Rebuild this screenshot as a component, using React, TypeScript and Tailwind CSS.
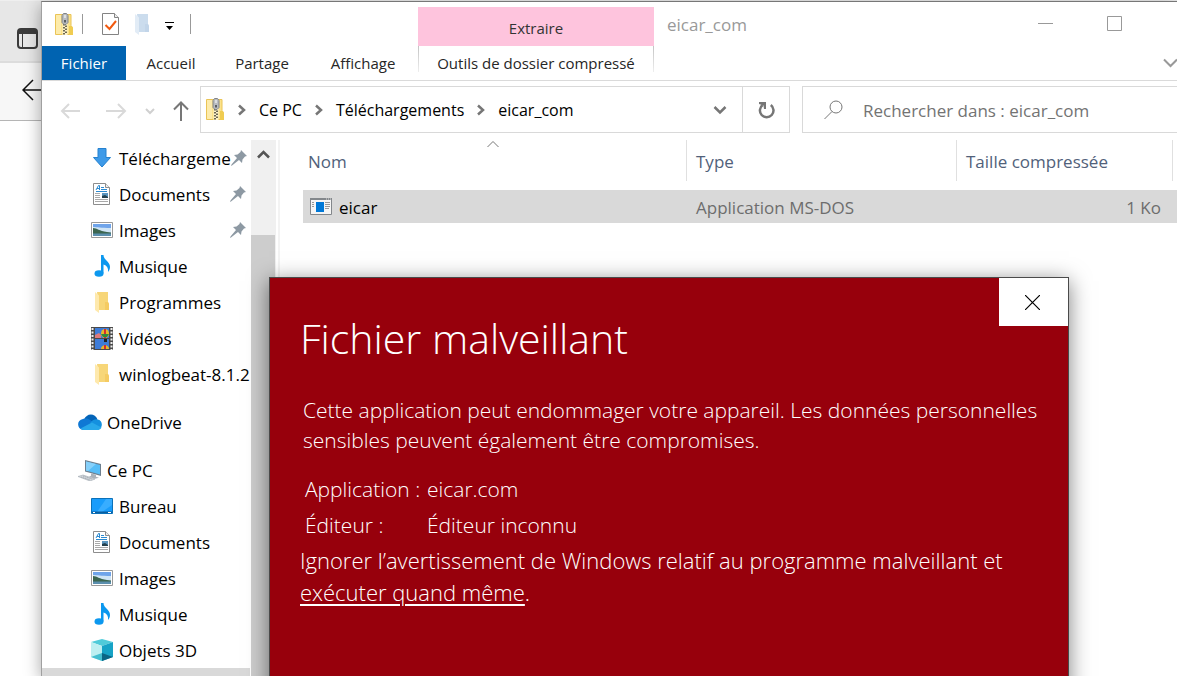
import React from "react";

type IconProps = { className?: string };

const ZipFolder = ({ className = "" }: IconProps) => (
  <svg className={className} width="18" height="23" viewBox="0 0 18 23" aria-hidden="true">
    <path d="M0.500 1.500H16v11l1.500 2v7H0.500z" fill="#fbe28a" stroke="#eac456" />
    <path d="M1 2h5v19H1z" fill="#fdebaa" />
    <path d="M14 13h2.500l1.500 2v7H14z" fill="#f0cc51" />
    <path d="M7.500 10h5v12h-5z" fill="#fff4c9" />
    <path d="M8 11h2v1.500H8zM10 12.500h2V14h-2zM8 14h2v1.500H8zM10 15.500h2V17h-2zM8 17h2v1.500H8zM10 18.500h2V20h-2zM8 20h2v1.500H8z" fill="#6c6652" />
    <path d="M8.500 0.500h3l1.500 2v7l-2 2h-2l-2-2v-7z" fill="#b9bcc0" stroke="#808388" />
    <path d="M9.500 2h1v3h-1z" fill="#fff" />
    <path d="M9 7h2v2.500H9z" fill="#5c5f64" />
  </svg>
);

const CheckedPage = () => (
  <svg width="18" height="22" viewBox="0 0 18 22" aria-hidden="true">
    <path d="M0.500 0.500h12l4 4v17h-16z" fill="#fff" stroke="#838383" />
    <path d="M12.500 0.500v4h4" fill="#ededed" stroke="#838383" />
    <path d="M3.500 12l4 4 6.500-8" fill="none" stroke="#f2590e" strokeWidth="2" />
  </svg>
);

const Folder = ({ pale = false }: { pale?: boolean }) => (
  <svg width="14" height="21" viewBox="0 0 14 21" aria-hidden="true">
    <path d="M2 0h11v10l1 2v6H4z" fill={pale ? "#cbdced" : "#f7d678"} />
    <path d="M10 10h3l1 2v6h-4z" fill={pale ? "#c2d5e9" : "#f5cb62"} />
    <path d="M0 0l4 3.500V21l-4-3z" fill={pale ? "#e2ecf6" : "#fee9ad"} />
  </svg>
);

const DownArrow = () => (
  <svg width="18" height="20" viewBox="0 0 18 20" aria-hidden="true">
    <path d="M5 0.500h8v9h4.500L9 19 0.500 9.500H5z" fill="#3e9ae8" stroke="#2581cf" />
  </svg>
);

const DocIcon = () => (
  <svg width="18" height="22" viewBox="0 0 18 22" aria-hidden="true">
    <path d="M0.500 0.500h12l4 4v17h-16z" fill="#fff" stroke="#8d8d8d" />
    <path d="M12.500 0.500v4h4" fill="#eee" stroke="#8d8d8d" />
    <path d="M3 7l2.500-4.500h1V7M4 5.500h3" fill="none" stroke="#2b8ad1" />
    <path d="M8 4.500h3M8 6.500h6M3 8.500h11" stroke="#2b8ad1" />
    <path d="M2 10.500h5M2 12.500h5M2 14.500h5M2 16.500h13M2 18.500h13" stroke="#a9a9a9" />
    <path d="M9 10h6v5H9z" fill="#5a95bf" />
    <path d="M9 13l3-1 3 2v1H9z" fill="#24404d" />
  </svg>
);

const PictureIcon = () => (
  <svg width="22" height="16" viewBox="0 0 22 16" aria-hidden="true">
    <path d="M0.500 0.500h21v15h-21z" fill="#fff" stroke="#999" />
    <path d="M2 2h18v12H2z" fill="#6fa4ea" />
    <path d="M2 5c5 0 7 1 18 1v5H2z" fill="#cfe4f5" />
    <path d="M2 6c4 0 6 3 14 4l4 .5V12H2z" fill="#3c6650" />
    <path d="M2 11.500h18V14H2z" fill="#5b8fae" />
  </svg>
);

const MusicIcon = () => (
  <svg width="17" height="22" viewBox="0 0 17 22" aria-hidden="true">
    <ellipse cx="5" cy="18.500" rx="4.500" ry="3.300" fill="#0c98ef" />
    <path d="M7 0h2.500c0 5 6.500 6.500 6.500 12 0 2-1 4-2 5 .5-4-1-6.500-4.500-7.500v9H7z" fill="#0c98ef" />
  </svg>
);

const VideoIcon = () => (
  <svg width="22" height="23" viewBox="0 0 22 23" aria-hidden="true">
    <path d="M0 0h22v23H0z" fill="#4a4a4a" />
    <path d="M1.500 1v22M20.500 1v22" stroke="#eee" strokeWidth="2" strokeDasharray="2 1.500" />
    <path d="M4 1h14v10H4zM4 12h14v10H4z" fill="#3e7cd8" />
    <path d="M4 8l4-2 2 2v3H4z" fill="#e07a7c" />
    <ellipse cx="14" cy="6.500" rx="4" ry="4.500" fill="#e7b928" />
    <path d="M13 2h2v9h-2z" fill="#d32f2f" />
    <path d="M10 7h8l-2 3h-4z" fill="#2e8b3d" />
    <path d="M13 12h3v3h-3z" fill="#202020" />
    <path d="M10 22c0-5 8-5 8 0z" fill="#e7b928" />
    <path d="M13 18h2v4h-2z" fill="#d32f2f" />
  </svg>
);

const OneDriveIcon = () => (
  <svg width="24" height="16" viewBox="0 0 24 16" aria-hidden="true">
    <path d="M6 6C8-1 17-1.500 19.500 5.500L12 11z" fill="#0364b8" />
    <path d="M5 16C-1 15-2 6 5 5c3-1 6 0 7 1l6 4-6 6z" fill="#0f78d4" />
    <path d="M12 9c3-4 6-4 7.500-3.500C25 6 25 14 21 15z" fill="#1490df" />
    <path d="M2.500 14.500L14 8.500l9.500 5C22.500 15.500 21 16 19.500 16H6c-1.500 0-2.500-.5-3.500-1.500z" fill="#28a8ea" />
  </svg>
);

const ComputerIcon = () => (
  <svg width="24" height="21" viewBox="0 0 24 21" aria-hidden="true">
    <path d="M7 0l16 4v12L7 11.500z" fill="#6d7f8f" />
    <path d="M8 1.500l14 3.500v9.500L8 10.500z" fill="#56bdf7" />
    <path d="M8 1.500l10 2.500-8 7-2-.5z" fill="#86d0fa" />
    <path d="M13 13.500l5 1.200v2l3 1-4 1-6-2 2-1z" fill="#aab2ba" />
    <path d="M0 16.500l5-1.500 12 4-5 2z" fill="#d3d8dd" stroke="#a0a8b0" strokeWidth="0.600" />
    <path d="M3 17l9 3M5 16l9 3" stroke="#929ba4" strokeWidth="0.700" strokeDasharray="1.500 0.700" />
  </svg>
);

const DesktopIcon = () => (
  <svg width="22" height="16" viewBox="0 0 22 16" aria-hidden="true">
    <path d="M0.500 0.500h21v15h-21z" fill="#189cfb" stroke="#0b71b9" />
    <path d="M15 1h6v6L11 14H6z" fill="#38adff" />
    <path d="M1 13.500h20V15H1z" fill="#0a5d9e" />
    <path d="M2 14.500h2M17 14.500h3" stroke="#fff" />
  </svg>
);

const CubeIcon = () => (
  <svg width="22" height="22" viewBox="0 0 22 22" aria-hidden="true">
    <path d="M0 3l11-3 11 3-11 4z" fill="#4fcbd9" />
    <path d="M0 3l11 4v15L0 18z" fill="#bdeff1" />
    <path d="M0 18l11-4v8z" fill="#45bfd0" />
    <path d="M22 3L11 7v15l11-4z" fill="#16a3c6" />
    <path d="M11 14l11 4-11 4z" fill="#0b6584" />
  </svg>
);

const PinIcon = () => (
  <svg width="16" height="16" viewBox="0 0 16 16" aria-hidden="true">
    <path d="M10 0l6 6-2 .5-2.500 3L11 13l-3-3-7 5.500L0 16l.5-1.500L6 8 3 5l3.500-.5 3-2.500z" fill="#8d99a3" />
  </svg>
);

const AppIcon = () => (
  <svg width="22" height="17" viewBox="0 0 22 17" aria-hidden="true">
    <path d="M0.500 0.500h21v16h-21z" fill="#f5f5f5" stroke="#83878b" />
    <path d="M0 0h22v2H0z" fill="#83878b" />
    <path d="M16 1h1M18 1h1M20 1h1" stroke="#ddd" />
    <path d="M6 4h8v10H6z" fill="#0078d7" />
    <path d="M2 4.500h2M2 6.500h2M2 8.500h2M15 4.500h5M15 6.500h5M15 8.500h5M15 10.500h4" stroke="#999" />
  </svg>
);

const Chevron = () => (
  <svg width="8" height="12" viewBox="0 0 8 12" aria-hidden="true">
    <path d="M1 1.500L6 6 1 10.500" fill="none" stroke="#767676" strokeWidth="2.500" />
  </svg>
);

type NavItem = { label: string; icon: React.ReactNode; pinned?: boolean };

const quick: NavItem[] = [
  { label: "Téléchargeme", icon: <DownArrow />, pinned: true },
  { label: "Documents", icon: <DocIcon />, pinned: true },
  { label: "Images", icon: <PictureIcon />, pinned: true },
  { label: "Musique", icon: <MusicIcon /> },
  { label: "Programmes", icon: <Folder /> },
  { label: "Vidéos", icon: <VideoIcon /> },
  { label: "winlogbeat-8.1.2", icon: <Folder /> },
];

const computer: NavItem[] = [
  { label: "Bureau", icon: <DesktopIcon /> },
  { label: "Documents", icon: <DocIcon /> },
  { label: "Images", icon: <PictureIcon /> },
  { label: "Musique", icon: <MusicIcon /> },
  { label: "Objets 3D", icon: <CubeIcon /> },
];

const NavRow = ({ item }: { item: NavItem }) => (
  <li>
    <a href="#" className="flex h-9 items-center pl-12">
      <span className="flex w-6 shrink-0 justify-center">{item.icon}</span>
      <span className="ml-[5px] flex-1 pt-0.5 whitespace-nowrap">{item.label}</span>
      {item.pinned && (
        <span className="mr-1 shrink-0">
          <PinIcon />
        </span>
      )}
    </a>
  </li>
);

const RootRow = ({ label, icon }: NavItem) => (
  <a href="#" className="flex h-9 items-center pl-9">
    <span className="flex w-6 shrink-0 justify-center">{icon}</span>
    <span className="ml-[5px] pt-0.5">{label}</span>
  </a>
);

const BrowserEdge = () => (
  <div className="flex w-[41px] shrink-0 flex-col bg-white">
    <div className="flex h-[60px] justify-end bg-[#e7e7e7] pt-[27px] pr-[3px]">
      <svg width="21" height="21" viewBox="0 0 21 21" aria-hidden="true">
        <rect x="1" y="1" width="19" height="19" rx="3" fill="none" stroke="#3b3b3b" strokeWidth="2" />
        <path d="M1 3a2 2 0 012-2h15a2 2 0 012 2v3H1z" fill="#3b3b3b" />
        <path d="M5.500 6v14" stroke="#3b3b3b" />
      </svg>
    </div>
    <div className="flex h-[60px] items-center justify-end overflow-hidden border-t-2 border-b border-t-[#dcdcdc] border-b-[#b5b5b5] bg-[#f7f7f7] pb-[3px]">
      <svg width="19" height="22" viewBox="0 0 19 22" aria-hidden="true">
        <path d="M11 1L1 11l10 10M1 11h18" fill="none" stroke="#111" strokeWidth="1.500" />
      </svg>
    </div>
  </div>
);

const Header = () => (
  <header className="grid grid-cols-[376px_236px_1fr] border-b border-[#dadada]">
    <div className="flex h-11 items-center pl-[13px]">
      <ZipFolder />
      <span className="ml-[9px] h-5 w-px bg-[#999]" />
      <button aria-label="Propriétés" className="ml-[19px]">
        <CheckedPage />
      </button>
      <button aria-label="Nouveau dossier" className="ml-[15px]">
        <Folder pale />
      </button>
      <button aria-label="Personnaliser" className="ml-4 pt-1">
        <svg width="9" height="8" viewBox="0 0 9 8" aria-hidden="true">
          <path d="M0 0.500h9" stroke="#000" />
          <path d="M1 4h7L4.500 8z" fill="#000" />
        </svg>
      </button>
      <span className="ml-4 h-5 w-px bg-[#999]" />
    </div>
    <div className="mt-[5px] flex items-center justify-center bg-[#fec4dd] pt-1 text-[15px] text-[#333]">Extraire</div>
    <div className="flex h-11 items-center">
      <h1 className="flex-1 pt-0.5 pl-[13px] text-[17px] text-[#999]">eicar_com</h1>
      <button aria-label="Réduire" className="flex h-full w-[69px] items-center justify-center pb-0.5">
        <svg width="15" height="15" viewBox="0 0 15 15" aria-hidden="true">
          <path d="M0 7.500h15" stroke="#999" />
        </svg>
      </button>
      <button aria-label="Agrandir" className="mr-7 flex h-full w-[69px] items-center justify-center pb-0.5">
        <svg width="15" height="15" viewBox="0 0 15 15" aria-hidden="true">
          <path d="M0.500 0.500h14v14h-14z" fill="none" stroke="#999" />
        </svg>
      </button>
    </div>
    <nav className="flex h-[34px] text-[15px] text-[#262626]">
      <button className="w-[84px] bg-[#0063b1] text-white">Fichier</button>
      <button className="w-[90px]">Accueil</button>
      <button className="w-[92px]">Partage</button>
      <button className="w-[110px]">Affichage</button>
    </nav>
    <div className="flex text-[15px] text-[#262626]">
      <span className="h-[26px] w-px bg-linear-to-b from-[#c4c4c4] to-[#eee]" />
      <button className="flex-1 whitespace-nowrap">Outils de dossier compressé</button>
      <span className="h-[26px] w-px bg-linear-to-b from-[#c4c4c4] to-[#eee]" />
    </div>
    <div className="flex items-center justify-end overflow-hidden">
      <button aria-label="Développer le ruban">
        <svg width="14" height="10" viewBox="0 0 14 10" aria-hidden="true">
          <path d="M1 1.500l6.500 6.500L14 1.500" fill="none" stroke="#999" strokeWidth="2" />
        </svg>
      </button>
    </div>
  </header>
);

const AddressBar = () => (
  <div className="flex h-[59px] items-start pt-[5px] text-[17px] text-black">
    <div className="flex h-[47px] w-[158px] shrink-0 items-center pt-[3px] pl-[18px]">
      <button aria-label="Précédent">
        <svg width="21" height="16" viewBox="0 0 21 16" aria-hidden="true">
          <path d="M9 1L2 8l7 7M2 8h18" fill="none" stroke="#d9d9d9" strokeWidth="2" />
        </svg>
      </button>
      <button aria-label="Suivant" className="ml-[25px]">
        <svg width="21" height="16" viewBox="0 0 21 16" aria-hidden="true">
          <path d="M12 1l7 7-7 7M0 8h19" fill="none" stroke="#d9d9d9" strokeWidth="2" />
        </svg>
      </button>
      <button aria-label="Emplacements récents" className="ml-[18px]">
        <svg width="10" height="7" viewBox="0 0 10 7" aria-hidden="true">
          <path d="M1 1l4 4 4-4" fill="none" stroke="#d0d0d0" strokeWidth="2" />
        </svg>
      </button>
      <button aria-label="Dossier parent" className="ml-[18px]">
        <svg width="16" height="20" viewBox="0 0 16 20" aria-hidden="true">
          <path d="M1 8.500l7-7 7 7M8 2v18" fill="none" stroke="#777" strokeWidth="2" />
        </svg>
      </button>
    </div>
    <div className="flex h-[47px] flex-1 items-center border border-[#d9d9d9] pl-[5px]">
      <ZipFolder />
      <nav aria-label="Chemin" className="ml-[14px] flex flex-1 items-center gap-[13px] text-[16px] whitespace-nowrap">
        <Chevron />
        <a href="#">Ce PC</a>
        <Chevron />
        <a href="#">Téléchargements</a>
        <Chevron />
        <a href="#">eicar_com</a>
      </nav>
      <button aria-label="Historique" className="mr-[15px]">
        <svg width="14" height="10" viewBox="0 0 14 10" aria-hidden="true">
          <path d="M1.500 2L7 7.500 12.500 2" fill="none" stroke="#767676" strokeWidth="2.500" />
        </svg>
      </button>
      <button aria-label="Actualiser" className="flex h-full w-[47px] items-center justify-center border-l border-[#d9d9d9]">
        <svg width="17" height="18" viewBox="0 0 17 18" aria-hidden="true">
          <path d="M12.800 4a6.800 6.800 0 11-8.200 0" fill="none" stroke="#767676" strokeWidth="2.500" />
          <path d="M1 1h7v7H6L5.500 4.500 1 3z" fill="#767676" />
        </svg>
      </button>
    </div>
    <label className="ml-3 flex h-[47px] w-[375px] items-center border border-r-0 border-[#d9d9d9] pl-[21px]">
      <svg width="19" height="20" viewBox="0 0 19 20" aria-hidden="true">
        <circle cx="12" cy="7" r="6" fill="none" stroke="#777" />
        <path d="M8 11.500L0.500 19" stroke="#777" />
      </svg>
      <input
        aria-label="Rechercher"
        placeholder="Rechercher dans : eicar_com"
        className="ml-5 min-w-0 flex-1 bg-transparent pt-0.5 outline-none placeholder:text-[#737373]"
      />
    </label>
  </div>
);

const Sidebar = () => (
  <aside className="flex w-[238px] shrink-0 border-r-2 border-[#f3f3f3] text-[17px] text-black">
    <nav className="w-[208px] overflow-hidden">
      <ul>
        {quick.map((item) => (
          <NavRow key={item.label} item={item} />
        ))}
      </ul>
      <div className="mt-3">
        <RootRow label="OneDrive" icon={<OneDriveIcon />} />
      </div>
      <div className="mt-3">
        <RootRow label="Ce PC" icon={<ComputerIcon />} />
        <ul>
          {computer.map((item) => (
            <NavRow key={item.label} item={item} />
          ))}
        </ul>
      </div>
      <div className="h-9 bg-[#d9d9d9]" />
    </nav>
    <div className="ml-px flex w-[25px] flex-col bg-[#f0f0f0]">
      <button aria-label="Défiler vers le haut" className="flex h-[95px] items-start justify-center pt-[10px]">
        <svg width="13" height="9" viewBox="0 0 13 9" aria-hidden="true">
          <path d="M1 7.500L6.500 2 12 7.500" fill="none" stroke="#555" strokeWidth="2.500" />
        </svg>
      </button>
      <div className="mr-px flex-1 bg-[#cdcdcd]" />
    </div>
  </aside>
);

const FileList = () => (
  <main className="min-w-0 flex-1 pl-[23px] text-[17px]">
    <table className="w-full table-fixed border-separate border-spacing-0">
      <colgroup>
        <col className="w-[384px]" />
        <col className="w-[270px]" />
        <col className="w-[216px]" />
        <col />
      </colgroup>
      <thead className="text-[#51617a]">
        <tr className="h-[41px] text-left">
          <th className="relative border-r border-[#e0e0e0] pt-0.5 pl-[5px] font-normal">
            Nom
            <svg className="absolute top-0 left-1/2 -ml-2" width="12" height="8" viewBox="0 0 12 8" aria-hidden="true">
              <path d="M0.500 7L6 1.500 11.500 7" fill="none" stroke="#777" />
            </svg>
          </th>
          <th className="border-r border-[#e0e0e0] pt-0.5 pl-[9px] font-normal">Type</th>
          <th className="border-r border-[#e0e0e0] pt-0.5 pl-[9px] font-normal">Taille compressée</th>
          <td />
        </tr>
      </thead>
      <tbody>
        <tr className="h-[9px]">
          <td />
        </tr>
        <tr className="h-[33px] bg-[#d9d9d9] text-[#6d6d6d]">
          <td className="pl-[7px]">
            <span className="flex items-center gap-[7px] text-black">
              <AppIcon />
              <span className="pt-0.5">eicar</span>
            </span>
          </td>
          <td className="pt-0.5 pl-[9px]">Application MS-DOS</td>
          <td className="pt-0.5 pr-3 text-right">1 Ko</td>
          <td />
        </tr>
      </tbody>
    </table>
  </main>
);

const Warning = () => (
  <section
    role="dialog"
    aria-labelledby="warning-title"
    className="absolute top-[277px] bottom-[-40px] left-[269px] w-[800px] border border-[#4a4a4a] bg-[#97000c] pl-[30px] text-[21px] font-light text-white shadow-[0_4px_20px_rgba(0,0,0,0.5)]"
  >
    <div className="flex h-[90px] justify-between">
      <h2 id="warning-title" className="pt-[30px] text-[41px] leading-[60px]">
        Fichier malveillant
      </h2>
      <button aria-label="Fermer" className="flex h-12 w-[69px] items-center justify-center bg-white pr-0.5">
        <svg width="15" height="15" viewBox="0 0 15 15" aria-hidden="true">
          <path d="M0 0l15 15M15 0L0 15" stroke="#000" strokeWidth="1.200" />
        </svg>
      </button>
    </div>
    <p className="mt-[27px] pl-[3px] leading-[30px] whitespace-nowrap">
      Cette application peut endommager votre appareil. Les données personnelles
      <br />
      sensibles peuvent également être compromises.
    </p>
    <dl className="mt-4 mb-px grid grid-cols-[122px_1fr] pl-[5px] leading-9 whitespace-nowrap">
      <dt>Application :</dt>
      <dd>eicar.com</dd>
      <dt>Éditeur :</dt>
      <dd>Éditeur inconnu</dd>
    </dl>
    <p className="text-[22px] leading-8 whitespace-nowrap">
      Ignorer l’avertissement de Windows relatif au programme malveillant et
      <br />
      <a href="#" className="underline decoration-2 underline-offset-3">
        exécuter quand même
      </a>
      .
    </p>
  </section>
);

export default function App() {
  return (
    <div className="relative flex h-screen overflow-hidden bg-[#efefef] pt-px font-['Open_Sans','Noto_Sans',sans-serif]">
      <BrowserEdge />
      <div className="flex min-w-0 flex-1 flex-col border-t border-l border-t-[#777] border-l-[#a0a0a0] bg-white shadow-[0_4px_16px_rgba(0,0,0,0.35)]">
        <Header />
        <AddressBar />
        <div className="flex min-h-0 flex-1">
          <Sidebar />
          <FileList />
        </div>
      </div>
      <Warning />
    </div>
  );
}
